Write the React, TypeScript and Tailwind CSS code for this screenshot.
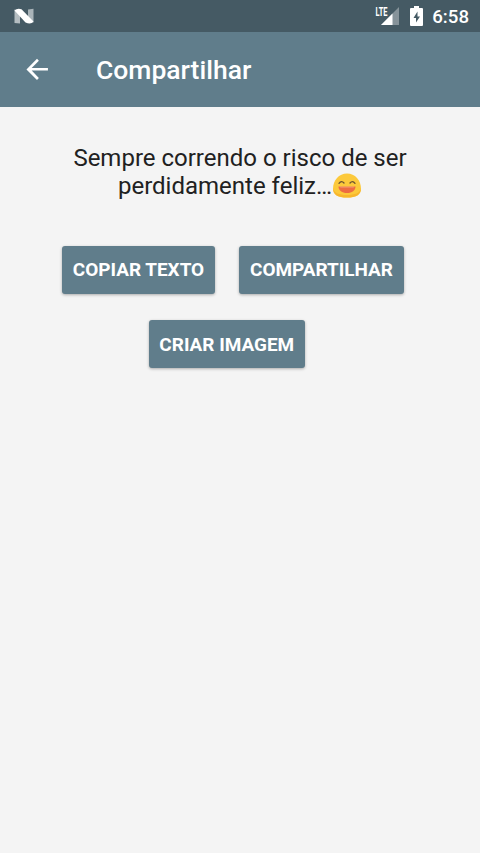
import type { ReactNode } from 'react'

function StatusBar() {
  return (
    <div className="flex h-8 items-center bg-[#455a64] pr-[11px] pl-[14px] text-white">
      <svg width="20" height="17" viewBox="0 0 20 17">
        <path d="M0.5 1.5 6 3v12.5L0.5 15z" fill="#b4bdc1" />
        <path d="M14 1.5 19.5 0.8v13.7L14 14z" fill="#a9b4b9" />
        <path d="M0.5 2.4Q3 0 7.500 1.200L19.500 13.500Q17 17 11.500 14.500z" fill="#fff" />
      </svg>
      <div className="ml-auto flex h-full items-center">
        <svg width="25" height="32" viewBox="0 0 25 32">
          <path d="M24 7v18H6z" fill="#fff" fillOpacity="0.35" />
          <path d="M17.5 13.5V25H6z" fill="#fff" />
          <text x="0.5" y="15.5" textLength="12" lengthAdjust="spacingAndGlyphs" fill="#fff" className="font-[Roboto,sans-serif] text-[12.5px] font-bold">
            LTE
          </text>
        </svg>
        <svg width="14" height="20" viewBox="0 0 14 20" className="ml-[10px]">
          <path
            fillRule="evenodd"
            fill="#fff"
            d="M4 0h5v2h3q1 0 1 1v16q0 1-1 1H1q-1 0-1-1V3q0-1 1-1h3zM7.500 5.500 3.500 12h2.500v4.500L10 10.500H7.500z"
          />
        </svg>
        <span className="ml-[8px] pt-px text-[18.67px] leading-8 font-medium">6:58</span>
      </div>
    </div>
  )
}

function AppBar() {
  return (
    <header className="flex h-[74.5px] items-center bg-[#607d8b] pt-px pl-[21px] text-white">
      <button type="button" aria-label="Voltar" className="-mt-px">
        <svg width="32" height="32" viewBox="0 0 24 24" fill="currentColor">
          <path d="M20.200 11.200H8l5.400-5.400L12 4.400l-7.900 7.900 7.900 7.900 1.400-1.400L8 13.200h12.200z" />
        </svg>
      </button>
      <h1 className="ml-[43px] text-[26.5px] leading-8 font-medium">Compartilhar</h1>
    </header>
  )
}

function Grin() {
  return (
    <svg width="30" height="25" viewBox="0 0 30 25" className="inline-block align-[-4px]">
      <path
        d="M15 0.500C7 0.500 1 7 1 16c0 6 5 8.500 14 8.500S29 22 29 16C29 7 23 0.500 15 0.500z"
        fill="#fcc93b"
      />
      <path d="M1.100 15C1 22 6 24.500 15 24.500S29 22 28.900 15C28 20 23 22 15 22S2 20 1.100 15z" fill="#f8b62d" />
      <path d="M6.500 13.500h17C23.500 17.500 20 20 15 20S6.500 17.500 6.500 13.500z" fill="#ed6c42" />
      <path d="M7.500 13.500h15l-1 1.200h-13z" fill="#fff1dc" fillOpacity="0.250" />
      <path d="M7 10.300Q9.500 7 12 10M18 10Q20.500 7 23 10.300" fill="none" stroke="#6d5431" strokeWidth="1.300" strokeLinecap="round" />
    </svg>
  )
}

function ActionButton({ children, className }: { children: ReactNode; className: string }) {
  return (
    <button
      type="button"
      className={`h-12 shrink-0 rounded-[3px] bg-[#607d8b] pt-[2px] text-center text-[18.95px] font-bold whitespace-nowrap text-white shadow-[0_1px_3px_rgba(0,0,0,0.3)] ${className}`}
    >
      {children}
    </button>
  )
}

export default function App() {
  return (
    <div className="flex min-h-screen flex-col bg-[#f4f4f4] font-[Roboto,sans-serif]">
      <StatusBar />
      <AppBar />
      <main className="pt-[37.5px]">
        <p className="text-center text-[24px] leading-7 text-[#212121]">
          Sempre correndo o risco de ser
          <br />
          perdidamente feliz…<Grin />
        </p>
        <div className="mt-[45.5px] flex gap-6 pl-[62px]">
          <ActionButton className="w-[153px]">COPIAR TEXTO</ActionButton>
          <ActionButton className="w-[165px]">COMPARTILHAR</ActionButton>
        </div>
        <div className="mt-[26.5px] flex pl-[149px]">
          <ActionButton className="w-[155.5px]">CRIAR IMAGEM</ActionButton>
        </div>
      </main>
    </div>
  )
}
